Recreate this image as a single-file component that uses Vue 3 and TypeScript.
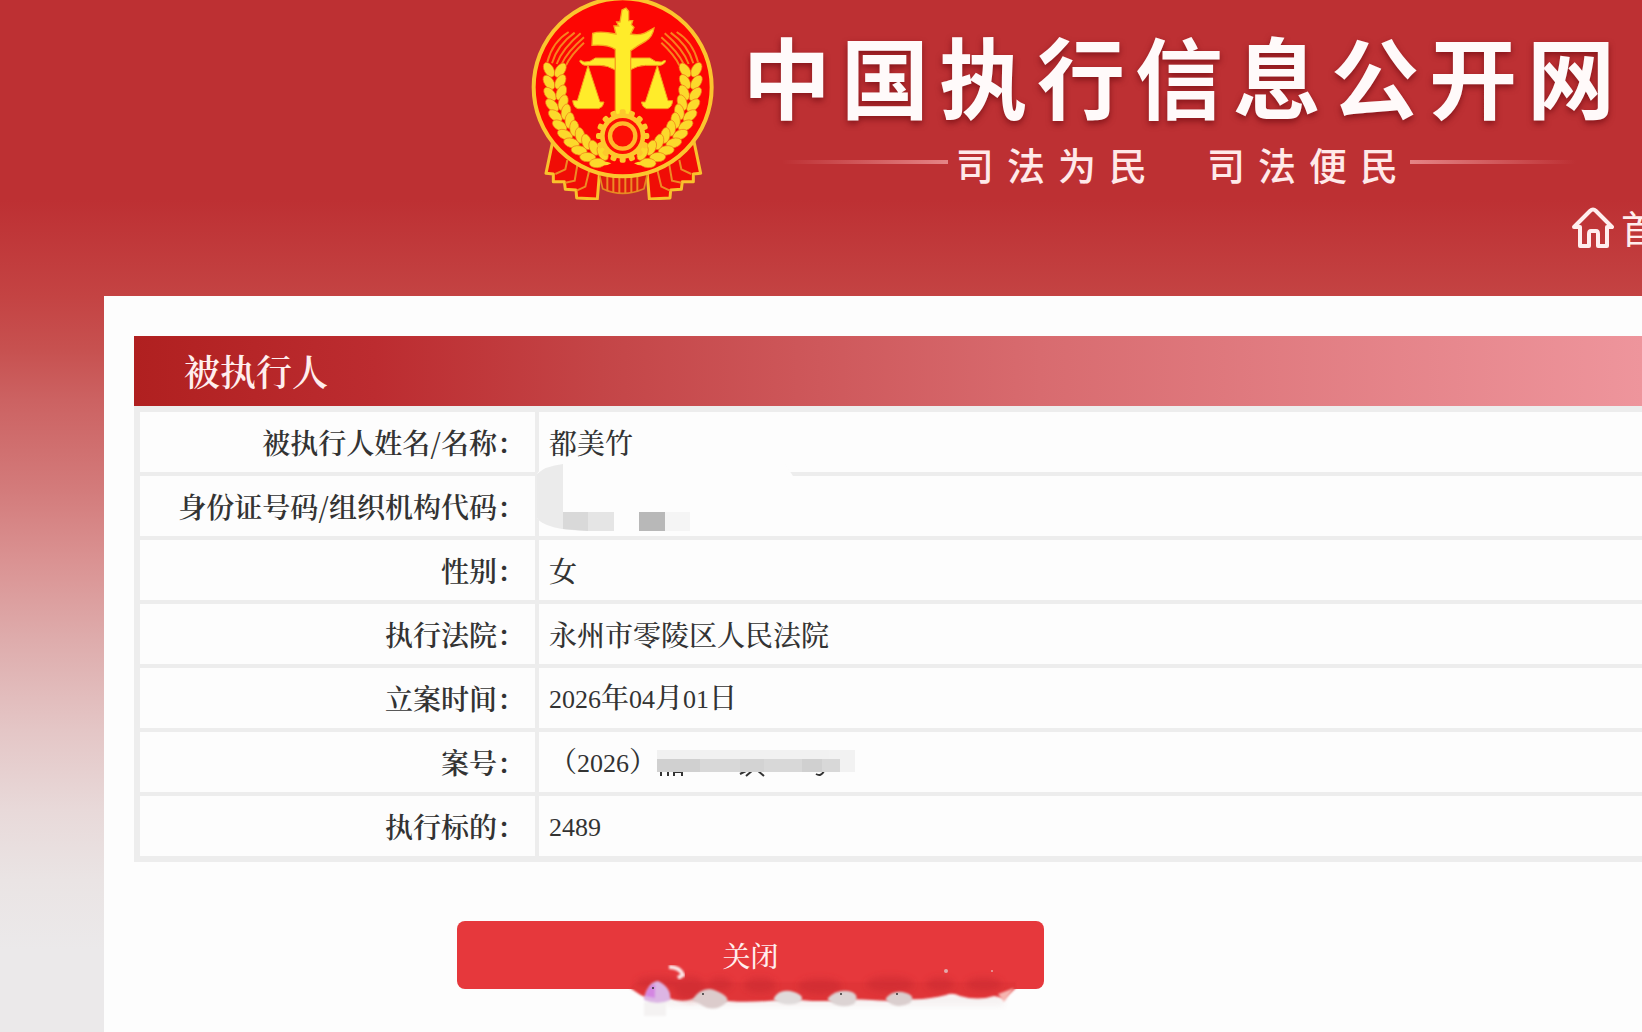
<script setup lang="ts">
interface Part {
  text: string
  num?: boolean
}
interface Row {
  label: string
  parts: Part[]
  mask?: 'id' | 'case'
}
interface Leaf {
  x: number
  y: number
  angle: number
}

const siteName: string[] = [...'中国执行信息公开网']
const mottoes: string[][] = [[...'司法为民'], [...'司法便民']]

const rows: Row[] = [
  { label: '被执行人姓名/名称：', parts: [{ text: '都美竹' }] },
  { label: '身份证号码/组织机构代码：', parts: [], mask: 'id' },
  { label: '性别：', parts: [{ text: '女' }] },
  { label: '执行法院：', parts: [{ text: '永州市零陵区人民法院' }] },
  {
    label: '立案时间：',
    parts: [
      { text: '2026', num: true },
      { text: '年' },
      { text: '04', num: true },
      { text: '月' },
      { text: '01', num: true },
      { text: '日' },
    ],
  },
  {
    label: '案号：',
    parts: [{ text: '（' }, { text: '2026', num: true }, { text: '）' }],
    mask: 'case',
  },
  { label: '执行标的：', parts: [{ text: '2489', num: true }] },
]

// Grains of one wheat ear, laid in pairs along a quadratic curve
const p0 = [104, 210]
const p1 = [96, 396]
const p2 = [240, 474]
const grains: Leaf[] = []
for (let i = 0; i < 11; i++) {
  const t = i / 10
  const u = 1 - t
  const x = u * u * p0[0] + 2 * u * t * p1[0] + t * t * p2[0]
  const y = u * u * p0[1] + 2 * u * t * p1[1] + t * t * p2[1]
  const dx = 2 * u * (p1[0] - p0[0]) + 2 * t * (p2[0] - p1[0])
  const dy = 2 * u * (p1[1] - p0[1]) + 2 * t * (p2[1] - p1[1])
  const len = Math.hypot(dx, dy)
  const a = (Math.atan2(dy, dx) * 180) / Math.PI
  const nx = (-dy / len) * 17
  const ny = (dx / len) * 17
  grains.push({ x: x + nx, y: y + ny, angle: a - 32 })
  grains.push({ x: x - nx, y: y - ny, angle: a + 32 })
}

const teeth: number[] = Array.from({ length: 16 }, (_, i) => i * 22.5)

function closePage(): void {
  window.close()
}
</script>

<template>
  <div class="page">
    <header class="header">
      <div class="brand">
        <svg class="emblem" viewBox="0 0 630 600" aria-hidden="true">
          <g fill="#f00d06" stroke="#f9c22c" stroke-width="9" stroke-linejoin="round">
            <path d="M98 425 L78 520 L100 522 L100 545 L133 545 L136 568 L168 570 L170 594 L232 597 L240 500 Z" />
            <path d="M522 425 L542 520 L520 522 L520 545 L487 545 L484 568 L452 570 L450 594 L388 597 L380 500 Z" />
          </g>
          <path d="M238 522 H382 L372 566 Q307 594 248 566 Z" fill="#dc1d10" stroke="#e58a22" stroke-width="5" />
          <path
            d="M142 480 L136 508 L106 522 M208 510 L196 560 L170 572 M172 495 L164 542 L136 548 M478 480 L484 508 L514 522 M412 510 L424 560 L450 572 M448 495 L456 542 L484 548 M262 530 V574 M280 530 V578 M298 530 V580 M316 530 V580 M334 530 V578 M352 530 V574"
            fill="none" stroke="#ee8a24" stroke-width="6"
          />
          <circle cx="308" cy="262" r="267" fill="#fd0603" stroke="#fbc52e" stroke-width="12" />
          <g v-for="side in 2" :key="side" :transform="side === 2 ? 'matrix(-1 0 0 1 616 0)' : undefined">
            <g fill="none" stroke="#f8801e" stroke-width="6">
              <path d="M82 186 Q98 125 146 96" />
              <path d="M96 190 Q112 135 164 98" />
              <path d="M110 192 Q128 145 182 100" />
              <path d="M124 194 Q142 155 192 112" />
              <path d="M138 196 Q152 165 192 128" />
            </g>
            <g fill="#fcd92b" stroke="#f0761a" stroke-width="2">
              <ellipse
                v-for="(g, i) in grains" :key="i" rx="24" ry="14"
                :transform="`translate(${g.x} ${g.y}) rotate(${g.angle})`"
              />
            </g>
            <path d="M226 492 Q250 478 274 490 Q254 502 226 492" fill="#fcd92b" />
            <path d="M286 174 H226 Q210 188 192 186 Q176 176 180 186 Q188 198 204 196 H240 Q262 196 286 210 Z" fill="#ffea2c" stroke="#f5a020" stroke-width="3" />
            <path d="M204 196 L172 302 H158 Q160 322 174 326 H236 Q250 322 252 306 H240 Z" fill="#ffec2a" stroke="#f79a1c" stroke-width="3" />
          </g>
          <path
            d="M286 350 V148 Q262 132 216 136 L218 100 Q240 92 288 102 L282 78 H296 L290 66 H300 L306 30 L318 24 L326 34 V62 H338 L334 74 L342 82 L332 102 Q366 108 384 94 L402 84 Q398 112 376 124 Q354 136 332 152 V350 Z"
            fill="#ffec2a" stroke="#f7a51e" stroke-width="4"
          />
          <g fill="#fdc82c" transform="translate(308 408)">
            <rect v-for="a in teeth" :key="a" x="-9" y="-80" width="18" height="24" rx="6" :transform="`rotate(${a})`" />
            <circle r="68" />
            <circle r="54" fill="#fd0f05" />
            <circle r="38" fill="none" stroke="#ffb92a" stroke-width="13" />
          </g>
        </svg>
        <div class="titles">
          <h1 class="site-name"><span v-for="(c, i) in siteName" :key="i">{{ c }}</span></h1>
          <div class="motto">
            <i class="rule rule-left"></i>
            <p v-for="(m, i) in mottoes" :key="i" class="phrase"><span v-for="(c, j) in m" :key="j">{{ c }}</span></p>
            <i class="rule rule-right"></i>
          </div>
        </div>
      </div>
      <nav class="nav">
        <a href="#" class="home">
          <svg class="home-icon" viewBox="0 0 42 42" aria-hidden="true">
            <path
              d="M2 20 L18 4 Q21 1 24 4 L40 20 H35 V39 H26 V27 Q26 24 24 24 H19 Q17 24 17 27 V39 H8 V20 Z"
              fill="none" stroke="#ffeeee" stroke-width="4" stroke-linejoin="round"
            />
          </svg>
          <span>首页</span>
        </a>
      </nav>
    </header>

    <main class="card">
      <h2 class="section">被执行人</h2>
      <table class="info">
        <tbody>
          <tr v-for="row in rows" :key="row.label">
            <th scope="row">{{ row.label }}</th>
            <td>
              <span v-for="(p, i) in row.parts" :key="i" :class="{ num: p.num }">{{ p.text }}</span>
              <svg v-if="row.mask === 'id'" class="mask-id" viewBox="0 0 270 72" aria-hidden="true">
                <path d="M0 10 Q4 2 26 0 H248 L256 12 V60 H160 V67 H76 Q10 68 0 54 Z" fill="#fdfdfd" />
                <path d="M0 10 Q8 2 26 0 V48 H51 V67 Q8 66 0 54 Z" fill="#ebebeb" />
                <path d="M26 48 H51 V67 Q38 66 26 65 Z" fill="#d9d9d9" />
                <rect x="51" y="48" width="26" height="19" fill="#e5e5e5" />
                <rect x="102" y="48" width="26" height="19" fill="#b8b8b8" />
                <rect x="128" y="48" width="25" height="19" fill="#f5f5f5" />
              </svg>
              <svg v-if="row.mask === 'case'" class="mask-case" viewBox="0 0 200 28" aria-hidden="true">
                <g fill="none" stroke="#333" stroke-width="2">
                  <path d="M4 20 V26 M11 20 V26 M17 21 V26 M25 20 V26 M17 22 H25" />
                  <path d="M83 24 L91 20 M89 26 L96 20 M100 20 L107 26" />
                  <path d="M159 24 Q164 27 167 21" />
                </g>
                <path d="M0 0 H172 V10 H0 Z" fill="#f1f1f1" />
                <path d="M172 0 H198 V22 H172 Z" fill="#f2f2f2" />
                <rect y="9" width="183" height="13" fill="#d8d8d8" />
                <rect y="9" width="43" height="13" fill="#d0d0d0" />
                <rect x="83" y="9" width="24" height="13" fill="#d3d3d3" />
                <rect x="145" y="9" width="20" height="13" fill="#d0d0d0" />
              </svg>
            </td>
          </tr>
        </tbody>
      </table>
      <div class="actions">
        <button type="button" class="close" @click="closePage">关闭</button>
        <svg class="smear" viewBox="0 0 400 60" aria-hidden="true">
          <defs>
            <filter id="soft" x="-10%" y="-30%" width="120%" height="160%"><feGaussianBlur stdDeviation="3" /></filter>
            <filter id="soft-edge"><feGaussianBlur stdDeviation="1" /></filter>
          </defs>
          <path d="M12 36 H376 V48 H40 Z" fill="#f6f2f2" filter="url(#soft)" />
          <path
            d="M2 30 L8 34 Q16 40 24 40 L40 40 Q54 45 64 41 L90 42 Q110 45 140 43 Q160 40 184 43 L200 43 Q220 40 244 42 Q262 44 280 41 Q300 42 318 37 Q324 34 332 38 Q350 43 366 38 L376 40 L388 30 V24 H8 Z"
            fill="#e03439" filter="url(#soft-edge)"
          />
          <g fill="#c4282e" opacity="0.45" filter="url(#soft)">
            <ellipse cx="30" cy="24" rx="22" ry="6" />
            <ellipse cx="62" cy="30" rx="16" ry="12" />
            <ellipse cx="92" cy="26" rx="12" ry="7" />
            <ellipse cx="132" cy="27" rx="16" ry="8" />
            <ellipse cx="192" cy="28" rx="22" ry="8" />
            <ellipse cx="262" cy="26" rx="24" ry="8" />
            <ellipse cx="312" cy="26" rx="14" ry="7" />
            <ellipse cx="356" cy="26" rx="18" ry="7" />
          </g>
          <path d="M370 36 L386 30 L376 44 Z" fill="#f6b5b0" filter="url(#soft-edge)" />
          <g filter="url(#soft-edge)">
            <rect x="16" y="44" width="22" height="14" fill="#f4f2f2" />
            <path d="M16 40 Q20 24 30 23 Q44 30 42 42 Q30 48 16 42 Z" fill="#dcb5e4" />
            <path d="M17 38 Q20 27 27 26 V40 Z" fill="#d486e2" />
            <path d="M64 42 Q74 28 86 32 Q102 38 99 44 Q86 56 72 46 Z" fill="#dccccc" />
            <path d="M146 40 Q152 30 166 34 Q178 38 172 44 Q160 50 146 42 Z" fill="#e0dbdb" />
            <path d="M200 40 Q210 30 224 34 Q232 38 226 46 Q212 52 200 42 Z" fill="#dcd3d3" />
            <path d="M258 40 Q266 31 278 35 Q288 38 282 45 Q268 52 258 42 Z" fill="#dacece" />
          </g>
          <path d="M41 9 Q52 9 55 17 L50 20" fill="none" stroke="#fbe8e8" stroke-width="4" filter="url(#soft-edge)" />
          <g fill="#e3a9aa"><circle cx="318" cy="13" r="2" /><circle cx="364" cy="13" r="1" /></g>
          <g fill="#333"><circle cx="25" cy="30" r="1" /><circle cx="75" cy="36" r="1" /><circle cx="213" cy="36" r="1" /><circle cx="269" cy="36" r="1" /></g>
        </svg>
      </div>
    </main>
  </div>
</template>

<style>
body {
  margin: 0;
}
</style>

<style scoped>
.page {
  display: flex;
  flex-direction: column;
  min-height: 100vh;
  overflow: hidden;
  font-family: 'Noto Serif CJK SC', 'Noto Sans CJK SC', serif;
  color: #333;
  background: linear-gradient(
    #bd3033 0, #bd3033 200px, #c44343 296px, #c75150 350px, #cc6262 400px,
    #d37b7b 490px, #da9292 560px, #deacac 640px, #e4c6c6 730px,
    #e8d9d9 810px, #eae4e4 880px, #ebe9ea 950px
  );
}
.header {
  padding-bottom: 45px;
}
.brand {
  display: flex;
  justify-content: flex-end;
  gap: 13px;
  height: 200px;
  padding-right: 27px;
}
.emblem {
  flex: none;
  width: 210px;
  height: 200px;
}
.titles {
  flex: none;
}
.site-name {
  display: flex;
  gap: 10px;
  margin: 0;
  padding-top: 24px;
  font: bold 88px/100px 'Noto Sans CJK SC', sans-serif;
  color: #fffafa;
  text-shadow: 0 3px 6px rgba(110, 10, 15, 0.7);
}
.motto {
  display: flex;
  justify-content: center;
  gap: 8px;
  margin-top: 18px;
  color: #ffe9e9;
  font: 500 38px/44px 'Noto Sans CJK SC', sans-serif;
}
.phrase {
  display: flex;
  gap: 13px;
  margin: 0;
}
.phrase + .phrase {
  margin-left: 52px;
}
.rule {
  width: 166px;
  height: 4px;
  margin-top: 18px;
}
.rule-left {
  background: linear-gradient(90deg, transparent, #e58486);
}
.rule-right {
  margin-left: 4px;
  background: linear-gradient(90deg, #e58486, transparent);
}
.nav {
  display: flex;
  justify-content: flex-end;
  margin: 7px -55px 0 0;
}
.home {
  display: flex;
  flex: none;
  gap: 7px;
  height: 44px;
  color: #ffeeee;
  font: 38px/40px 'Noto Sans CJK SC', sans-serif;
  text-decoration: none;
}
.home-icon {
  width: 42px;
  height: 42px;
}
.card {
  flex: 1;
  margin-left: 104px;
  padding: 40px 0 40px 30px;
  background: #fdfdfd;
}
.section {
  margin: 0;
  padding-left: 50px;
  font-size: 36px;
  font-weight: 600;
  line-height: 70px;
  color: #ffeeee;
  background: linear-gradient(90deg, #b02020, #bc2c30 16%, #c44547 31%, #d86b6f 60%, #ee959c);
}
.info {
  width: 100%;
  border: 6px solid #ededed;
  border-right: 0;
  border-spacing: 0;
  table-layout: fixed;
  font-size: 28px;
  line-height: 40px;
}
.info th,
.info td {
  height: 60px;
  padding: 0;
  border-bottom: 4px solid #ededed;
}
.info tr:last-child th,
.info tr:last-child td {
  border-bottom: 0;
}
.info th {
  width: 385px;
  padding-right: 10px;
  border-right: 4px solid #ededed;
  font-weight: 600;
  text-align: right;
  white-space: nowrap;
}
.info td {
  position: relative;
  padding-left: 10px;
  font-weight: 500;
}
.num {
  font-family: 'Liberation Serif', serif;
  font-size: 26px;
}
.mask-id {
  position: absolute;
  top: -12px;
  left: -2px;
  width: 270px;
  height: 72px;
}
.mask-case {
  position: absolute;
  top: 18px;
  left: 118px;
  width: 200px;
  height: 28px;
}
.actions {
  position: relative;
  width: 587px;
  margin: 59px 0 0 323px;
}
.close {
  display: block;
  width: 100%;
  height: 68px;
  border: 0;
  border-radius: 8px;
  font: 500 28px 'Noto Serif CJK SC', 'Noto Sans CJK SC', serif;
  color: #ffeeee;
  background: #e6383c;
}
.smear {
  position: absolute;
  top: 37px;
  left: 171px;
  width: 400px;
  height: 60px;
  pointer-events: none;
}
</style>
